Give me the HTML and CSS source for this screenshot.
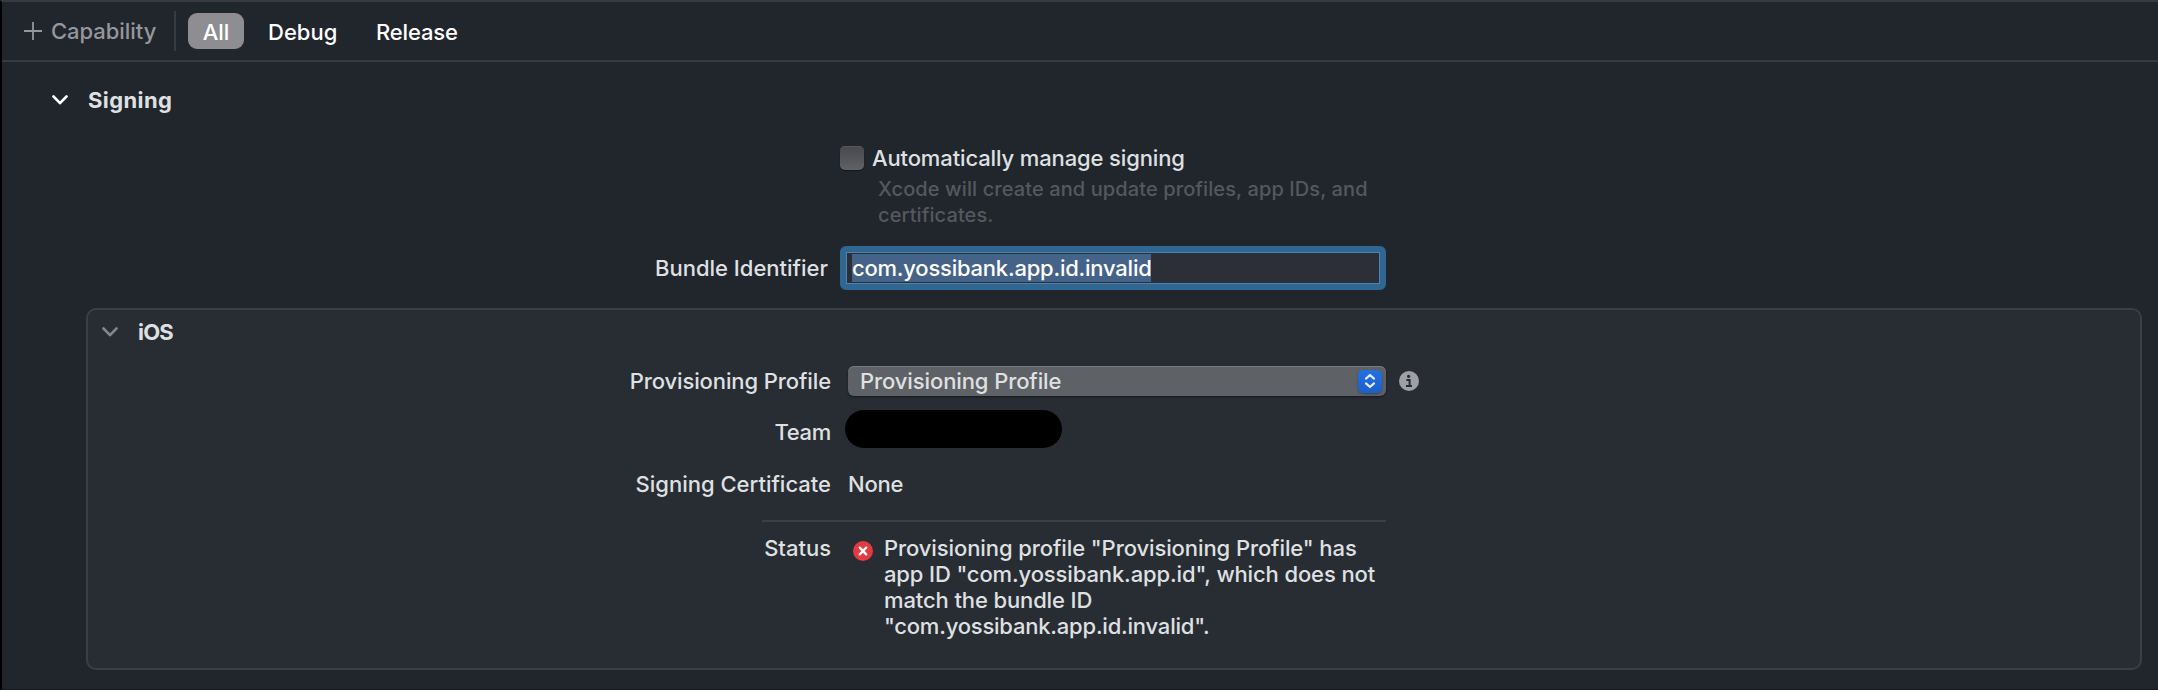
FILE: index.html
```
<!DOCTYPE html>
<html lang="en">
<head>
<meta charset="utf-8">
<title>Signing &amp; Capabilities</title>
<link rel="stylesheet" href="styles.css">
</head>
<body>
<div class="editor">
  <header class="toolbar">
    <div class="add">
      <svg width="18" height="18" viewBox="0 0 18 18"><path d="M9 0v18M0 9h18" stroke="currentColor" stroke-width="1.8"/></svg>
      <span class="t-capability">Capability</span>
    </div>
    <nav class="tabs">
      <span class="tab tab-on">All</span>
      <span class="tab t-debug">Debug</span>
      <span class="tab t-release">Release</span>
    </nav>
  </header>
  <main>
    <div class="section-head">
      <svg width="16" height="10" viewBox="0 0 16 10"><path d="M1.5 1.5 8 8.2l6.500-6.700" fill="none" stroke="#fff" stroke-width="2.6" stroke-linecap="round" stroke-linejoin="round"/></svg>
      <span class="t-signing">Signing</span>
    </div>
    <div class="auto">
      <div class="check-row"><span class="checkbox"></span><span class="t-auto">Automatically manage signing</span></div>
      <div class="hint">Xcode will create and update profiles, app IDs, and<br>certificates.</div>
    </div>
    <div class="bundle">
      <span class="bundle-label">Bundle Identifier</span>
      <div class="field"><span class="selected">com.yossibank.app.id.invalid</span></div>
    </div>
    <section class="panel">
      <div class="panel-head">
        <svg width="16" height="10" viewBox="0 0 16 10"><path d="M1.500 1.500 8 8.200l6.500-6.700" fill="none" stroke="#85868a" stroke-width="2.600" stroke-linecap="round" stroke-linejoin="round"/></svg>
        <span class="t-ios">iOS</span>
      </div>
      <div class="row row-profile">
        <span class="label t-profile">Provisioning Profile</span>
        <div class="select">
          <span class="t-profile">Provisioning Profile</span>
          <span class="stepper"><svg width="12" height="16" viewBox="0 0 12 16"><path d="M2 5.600 6 2l4 3.600M2 10.400 6 14l4-3.600" fill="none" stroke="#e4ecfa" stroke-width="2.200" stroke-linecap="round" stroke-linejoin="round"/></svg></span>
        </div>
        <svg class="info" width="20" height="20" viewBox="0 0 20 20"><circle cx="10" cy="10" r="10" fill="#9fa0a4"/><circle cx="9.600" cy="5.300" r="1.600" fill="#282c33"/><path d="M7.400 8.900h3.200v6M7 15.100h6" fill="none" stroke="#282c33" stroke-width="2"/></svg>
      </div>
      <div class="row row-team">
        <span class="label t-team">Team</span>
        <span class="redacted"></span>
      </div>
      <div class="row row-cert">
        <span class="label t-cert">Signing Certificate</span>
        <span class="value">None</span>
      </div>
      <div class="rule"></div>
      <div class="row row-status">
        <span class="label t-status">Status</span>
        <svg class="error" width="20" height="20" viewBox="0 0 20 20"><circle cx="10" cy="10" r="10" fill="#e23b42"/><path d="m6.800 6.600 6.400 6.800M13.200 6.600l-6.400 6.800" stroke="#fff" stroke-width="2.300" stroke-linecap="round"/></svg>
        <div class="message"><span class="m1">Provisioning profile "Provisioning Profile" has</span><span class="m2">app ID "com.yossibank.app.id", which does not</span><span class="m3">match the bundle ID</span><span class="m4">"com.yossibank.app.id.invalid".</span></div>
      </div>
    </section>
  </main>
</div>
</body>
</html>
```
FILE: styles.css
```
* { box-sizing: border-box; }
body { margin: 0; background: #21252c; }
svg { display: block; flex: none; }
.editor {
  height: 690px;
  border-left: 2px solid #000;
  border-top: 2px solid #373a42;
  border-bottom: 1px solid #17191e;
  overflow: hidden;
  color: #dfe0e1;
  font: 450 22px/26px Inter, "Liberation Sans", sans-serif;
  white-space: nowrap;
}
.toolbar { display: flex; align-items: center; height: 60px; border-bottom: 2px solid #373a42; }
.add { display: flex; align-items: center; gap: 9px; width: 174px; height: 40px; padding-left: 22px; border-right: 2px solid #373a42; color: #96979b; }
.t-capability { letter-spacing: -0.05px; }
.tabs { display: flex; align-items: center; margin-left: 12px; color: #fff; font-weight: 500; }
.tab { height: 36px; line-height: 39px; }
.tab-on { width: 56px; border-radius: 9px; background: #8e8d92; text-align: center; }
.t-debug { margin-left: 24px; width: 108px; }
.t-release { letter-spacing: -0.15px; }
.t-signing { letter-spacing: 0.4px; }
.t-ios { letter-spacing: -0.8px; }
.section-head { display: flex; align-items: center; gap: 20px; height: 76px; margin-bottom: 2px; padding-left: 50px; font-weight: 700; }
.auto { padding-left: 838px; }
.check-row { display: flex; align-items: center; gap: 8px; height: 36px; }
.t-auto { letter-spacing: -0.13px; }
.checkbox { width: 24px; height: 24px; border-radius: 5px; background: linear-gradient(#46484c, #606266); box-shadow: 0 1px 1px #15181c, inset 0 1px #55575b; }
.hint { padding-left: 38px; color: #55585d; font-size: 20px; letter-spacing: 0.1px; }
.bundle { display: flex; align-items: center; margin-top: 18px; }
.bundle-label { width: 826px; margin-right: 12px; text-align: right; }
.field { display: flex; align-items: center; width: 546px; height: 44px; padding-left: 5px; border: 6px solid #306792; border-radius: 6px; background: #2c2f37; box-shadow: inset 0 0 0 1px #4785b2; }
.selected { width: 299px; height: 28px; margin-left: 1px; line-height: 28px; letter-spacing: -0.22px; background: #456389; color: #fff; }
.panel { width: 2056px; height: 362px; margin: 18px 0 0 84px; border: 2px solid #3a3e46; border-radius: 10px; background: #282c33; }
.panel-head { display: flex; align-items: center; gap: 20px; height: 44px; padding-left: 14px; font-weight: 700; }
.row { display: flex; align-items: center; }
.label { width: 743px; flex: none; text-align: right; }
.t-profile { letter-spacing: -0.1px; }
.t-team { letter-spacing: -0.3px; }
.row-profile { height: 30px; margin-top: 12px; }
.select { display: flex; align-items: center; justify-content: space-between; width: 538px; height: 30px; margin-left: 17px; padding: 0 4px 0 12px; border-radius: 6px; background: #5e6165; box-shadow: inset 0 1px #77797d, 0 1px 2px #15181d; }
.stepper { display: grid; place-items: center; width: 24px; height: 23px; border-radius: 5px; background: linear-gradient(#2370e2, #1b5fc9); box-shadow: 0 1px 2px #34465f; }
.info { margin-left: 13px; }
.row-team { height: 44px; margin-top: 14px; }
.redacted { align-self: flex-start; width: 217px; height: 38px; margin-left: 14px; border-radius: 19px; background: #000; }
.row-cert { height: 44px; margin-top: 8px; }
.value { margin-left: 17px; letter-spacing: -0.2px; }
.rule { width: 624px; height: 2px; margin: 14px 0 13px 674px; background: #3b3f46; }
.row-status { align-items: flex-start; }
.error { margin: 6px 11px 0 22px; }
.message { display: flex; flex-direction: column; align-items: flex-start; }
.m1 { letter-spacing: -0.09px; }
.m2, .m3 { letter-spacing: -0.12px; }
.m4 { letter-spacing: -0.21px; }
```
